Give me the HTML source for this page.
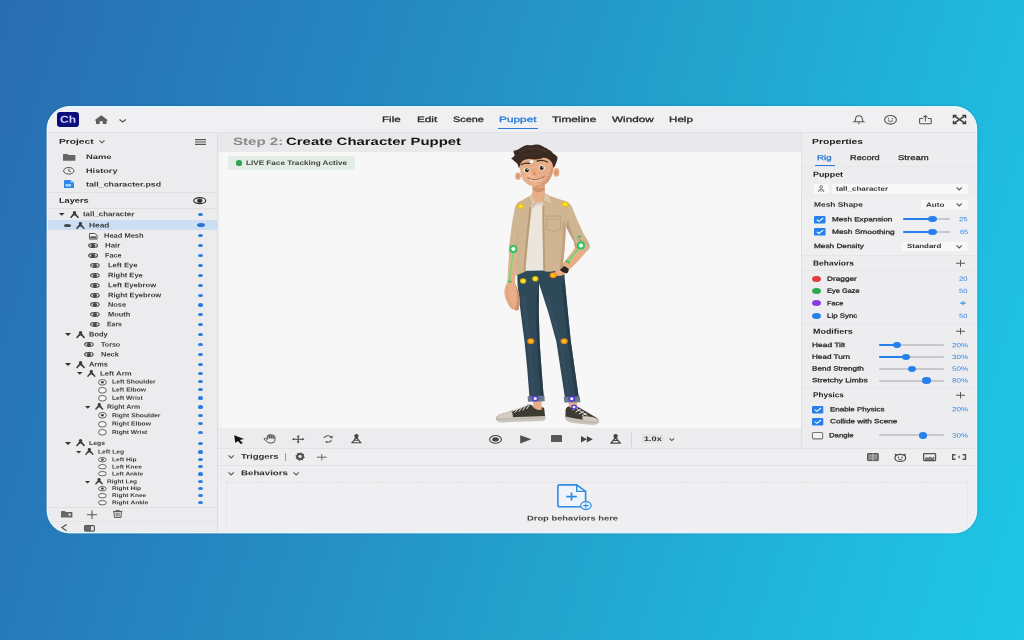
<!DOCTYPE html><html><head><meta charset="utf-8"><title>Character Animator</title><style>
html,body{margin:0;padding:0;width:1024px;height:640px;overflow:hidden}
body{background:linear-gradient(107deg,#2a6cb3 0%,#267ab9 16%,#2591c5 42%,#22a2cc 58%,#20bade 84%,#1ec7e4 100%);font-family:"Liberation Sans",sans-serif;position:relative}
#win{position:absolute;left:0;top:0;width:1024px;height:640px;clip-path:inset(106.4px 46.7px 106.5px 46.5px round 23px);filter:blur(0.4px)}
#edge{position:absolute;left:46.5px;top:106.4px;width:930.8px;height:427.1px;border-radius:23px;box-shadow:inset 0 0 0 1.1px rgba(222,250,255,.95),inset 0 0 1.6px 1px rgba(222,250,255,.6),0 0 2.5px rgba(10,70,120,.4);pointer-events:none}
.t{position:absolute;white-space:nowrap;line-height:1;transform-origin:0 50%}
svg{overflow:visible}
</style></head><body>
<div id="win">
<div style="position:absolute;left:46px;top:106px;width:932px;height:26px;background:#f0f0f2;"></div>
<div style="position:absolute;left:46px;top:132px;width:932px;height:1px;background:#e3e3e6;"></div>
<div style="position:absolute;left:46px;top:133px;width:171px;height:401px;background:#ececee;"></div>
<div style="position:absolute;left:217px;top:133px;width:1px;height:401px;background:#dddde0;"></div>
<div style="position:absolute;left:218px;top:133px;width:584px;height:19px;background:#e9e9eb;"></div>
<div style="position:absolute;left:218px;top:152px;width:2px;height:382px;background:#f1f1f3;"></div>
<div style="position:absolute;left:220px;top:152px;width:582px;height:276px;background:#f7f7f8;"></div>
<div style="position:absolute;left:218px;top:428px;width:584px;height:20px;background:#ececee;"></div>
<div style="position:absolute;left:802px;top:133px;width:176px;height:315px;background:#ededef;"></div>
<div style="position:absolute;left:801px;top:133px;width:1px;height:315px;background:#dfdfe2;"></div>
<div style="position:absolute;left:218px;top:448px;width:760px;height:1px;background:#e2e2e5;"></div>
<div style="position:absolute;left:218px;top:449px;width:760px;height:16px;background:#eeeef0;"></div>
<div style="position:absolute;left:218px;top:465px;width:760px;height:1px;background:#e2e2e5;"></div>
<div style="position:absolute;left:218px;top:466px;width:760px;height:16px;background:#eeeef0;"></div>
<div style="position:absolute;left:218px;top:482px;width:760px;height:52px;background:#efeff1;"></div>
<div style="position:absolute;left:56.7px;top:112.4px;width:22.4px;height:14.4px;border-radius:3.2px;background:#0c0c7a"></div>
<svg style="position:absolute;left:94.1px;top:114.8px;" width="14.6" height="9.3" viewBox="0 0 16 10.6" preserveAspectRatio="none"><path d="M8 0.3 L0.3 6.2 L2.2 6.2 L2.2 10.3 L6.3 10.3 L6.3 7 L9.7 7 L9.7 10.3 L13.8 10.3 L13.8 6.2 L15.7 6.2 Z" fill="#5e5e5e"/></svg>
<svg style="position:absolute;left:118.6px;top:118.7px;" width="7.4" height="3.6" viewBox="0 0 7.4 3.6"><path d="M0.5 0.5 L3.7 3 L6.9 0.5" fill="none" stroke="#555" stroke-width="1.1"/></svg>
<div style="position:absolute;left:498px;top:127.7px;width:39.5px;height:1.5px;background:#2a7bd6;"></div>
<svg style="position:absolute;left:853.2px;top:115px;" width="11.8" height="9" viewBox="0 0 12 10" preserveAspectRatio="none"><path d="M6 0.8 C3.4 0.8 2.6 2.8 2.6 4.6 C2.6 6.4 1.6 7 0.9 7.6 L11.1 7.6 C10.4 7 9.4 6.4 9.4 4.6 C9.4 2.8 8.6 0.8 6 0.8 Z" fill="none" stroke="#555" stroke-width="1.1"/><path d="M4.8 8.6 Q6 9.9 7.2 8.6" fill="none" stroke="#555" stroke-width="1.1"/></svg>
<svg style="position:absolute;left:884px;top:115px;" width="13" height="10" viewBox="0 0 13 10"><ellipse cx="6.5" cy="4.8" rx="5.9" ry="4.3" fill="none" stroke="#555" stroke-width="1.1"/><circle cx="4.6" cy="3.7" r="0.7" fill="#555"/><circle cx="8.4" cy="3.7" r="0.7" fill="#555"/><path d="M4 5.6 Q6.5 7.8 9 5.6" fill="none" stroke="#555" stroke-width="1"/></svg>
<svg style="position:absolute;left:918.6px;top:114.9px;" width="12.8" height="9.4" viewBox="0 0 13 11" preserveAspectRatio="none"><path d="M4 4 L1.2 4 Q0.6 4 0.6 4.8 L0.6 9.4 Q0.6 10.2 1.4 10.2 L11.6 10.2 Q12.4 10.2 12.4 9.4 L12.4 4.8 Q12.4 4 11.8 4 L9 4" fill="none" stroke="#555" stroke-width="1.1"/><path d="M6.5 7.2 L6.5 1 M4.4 2.8 L6.5 0.8 L8.6 2.8" fill="none" stroke="#555" stroke-width="1.1"/></svg>
<svg style="position:absolute;left:953px;top:115px;" width="13" height="9" viewBox="0 0 13 9"><path d="M1.5 1.2 L11.5 7.8 M11.5 1.2 L1.5 7.8" stroke="#3c3c3c" stroke-width="1.5" fill="none"/><path d="M0.5 3.2 L0.5 0.5 L3.6 0.5 M9.4 0.5 L12.5 0.5 L12.5 3.2 M12.5 5.8 L12.5 8.5 L9.4 8.5 M3.6 8.5 L0.5 8.5 L0.5 5.8" stroke="#3c3c3c" stroke-width="1.5" fill="none"/></svg>
<svg style="position:absolute;left:98.6px;top:139.9px;" width="6" height="3.2" viewBox="0 0 6 3.2"><path d="M0.5 0.4 L3.0 2.8000000000000003 L5.5 0.4" fill="none" stroke="#555" stroke-width="1.1"/></svg>
<svg style="position:absolute;left:195px;top:138.6px;" width="11" height="6" viewBox="0 0 11 6"><path d="M0 0.6 H11 M0 3 H11 M0 5.4 H11" stroke="#555" stroke-width="1.1"/></svg>
<svg style="position:absolute;left:63px;top:153.6px;" width="12.5" height="6.8" viewBox="0 0 12.5 6.8"><path d="M0 0.6 Q0 0 0.6 0 L4.4 0 L5.6 1.1 L11.8 1.1 Q12.4 1.1 12.4 1.7 L12.4 6.2 Q12.4 6.8 11.8 6.8 L0.6 6.8 Q0 6.8 0 6.2 Z" fill="#666"/></svg>
<svg style="position:absolute;left:63.3px;top:167px;" width="11.6" height="7.6" viewBox="0 0 11.6 7.6"><ellipse cx="5.8" cy="3.8" rx="5.2" ry="3.3" fill="none" stroke="#444" stroke-width="0.9"/><path d="M5.8 1.8 L5.8 4 L7.8 4.6" fill="none" stroke="#444" stroke-width="0.9"/></svg>
<svg style="position:absolute;left:64px;top:180px;" width="10" height="8" viewBox="0 0 10 8"><path d="M0.6 0 L6.6 0 L10 2.6 L10 7.4 Q10 8 9.4 8 L0.6 8 Q0 8 0 7.4 L0 0.6 Q0 0 0.6 0 Z" fill="#2f8af0"/><path d="M6.6 0 L6.6 2.6 L10 2.6 Z" fill="#9ccbfb"/><rect x="1.6" y="4.2" width="5.4" height="2.2" fill="#d6e9fd" opacity="0.85"/></svg>
<div style="position:absolute;left:46px;top:192px;width:171px;height:1px;background:#e0e0e3;"></div>
<svg style="position:absolute;left:192.5px;top:196.6px;" width="13.5" height="7.4" viewBox="0 0 13.5 7.4"><ellipse cx="6.75" cy="3.7" rx="6" ry="3" fill="none" stroke="#333" stroke-width="1.2"/><ellipse cx="6.75" cy="3.7" rx="2.7" ry="2.2" fill="#444"/><ellipse cx="6.75" cy="3.7" rx="1.2" ry="0.9" fill="#222"/></svg>
<div style="position:absolute;left:46px;top:208px;width:171px;height:1px;background:#e0e0e3;"></div>
<div style="position:absolute;left:46px;top:219.9px;width:170.6px;height:10.5px;background:#cbdef3;"></div>
<svg style="position:absolute;left:59.2px;top:213.18px;" width="5.500000000000005" height="2.6400000000000023" viewBox="0 0 5.500000000000005 2.6400000000000023"><path d="M0 0 L5.500000000000005 0 L2.7500000000000027 2.6400000000000023 Z" fill="#333"/></svg>
<svg style="position:absolute;left:70.3px;top:210.55px;" width="9.000000000000004" height="6.900000000000003" viewBox="0 0 9.000000000000004 6.900000000000003"><g transform="scale(1.0000000000000004,0.9200000000000005)"><circle cx="4.5" cy="1.6" r="1.65" fill="#3c3c3c"/><path d="M4.5 2.8 L1 6.9 M4.5 2.8 L8 6.9" fill="none" stroke="#3c3c3c" stroke-width="1.6" stroke-linecap="round"/><path d="M3.1 2.7 L5.9 2.7 L7 5.3 L2 5.3 Z" fill="#3c3c3c"/><path d="M3.6 5.4 L4.5 4.4 L5.4 5.4 Z" fill="#ececee" opacity="0.7"/></g></svg>
<div style="position:absolute;left:197.8px;top:212.65px;width:5.2px;height:3.3px;border-radius:50%;background:#2b7cdc"></div>
<svg style="position:absolute;left:76px;top:221.72666666666666px;" width="8.8" height="6.746666666666668" viewBox="0 0 8.8 6.746666666666668"><g transform="scale(0.9777777777777779,0.8995555555555557)"><circle cx="4.5" cy="1.6" r="1.65" fill="#3c3c3c"/><path d="M4.5 2.8 L1 6.9 M4.5 2.8 L8 6.9" fill="none" stroke="#3c3c3c" stroke-width="1.6" stroke-linecap="round"/><path d="M3.1 2.7 L5.9 2.7 L7 5.3 L2 5.3 Z" fill="#3c3c3c"/><path d="M3.6 5.4 L4.5 4.4 L5.4 5.4 Z" fill="#ececee" opacity="0.7"/></g></svg>
<div style="position:absolute;left:64.4px;top:223.9px;width:6.8999999999999915px;height:3px;border-radius:50%;background:#444"></div>
<div style="position:absolute;left:196.6px;top:223.3px;width:8.2px;height:4.1px;border-radius:50%;background:#2c74d2"></div>
<svg style="position:absolute;left:88.80000000000001px;top:232.6px;" width="8.3" height="6.2" viewBox="0 0 8.3 6.2"><path d="M0.5 0.5 L5.8 0.5 L8.1 2.4 L8.1 6.1 L0.5 6.1 Z" fill="#f4f4f6" stroke="#444" stroke-width="0.9"/><path d="M1.4 3.3 H7.2 V5.4 H1.4 Z" fill="#555"/></svg>
<div style="position:absolute;left:197.8px;top:234.04999999999998px;width:5.2px;height:3.3px;border-radius:50%;background:#2b7cdc"></div>
<svg style="position:absolute;left:87.5px;top:242.975px;" width="10.099999999999994" height="5.049999999999997" viewBox="0 0 10.099999999999994 5.049999999999997"><g transform="scale(1.0099999999999993)"><ellipse cx="5" cy="2.5" rx="4.4" ry="1.95" fill="none" stroke="#444" stroke-width="1.1"/><ellipse cx="5" cy="2.5" rx="2.3" ry="1.6" fill="#444"/></g></svg>
<div style="position:absolute;left:197.8px;top:243.85px;width:5.2px;height:3.3px;border-radius:50%;background:#2b7cdc"></div>
<svg style="position:absolute;left:87.5px;top:252.975px;" width="10.099999999999994" height="5.049999999999997" viewBox="0 0 10.099999999999994 5.049999999999997"><g transform="scale(1.0099999999999993)"><ellipse cx="5" cy="2.5" rx="4.4" ry="1.95" fill="none" stroke="#444" stroke-width="1.1"/><ellipse cx="5" cy="2.5" rx="2.3" ry="1.6" fill="#444"/></g></svg>
<div style="position:absolute;left:197.8px;top:253.85px;width:5.2px;height:3.3px;border-radius:50%;background:#2b7cdc"></div>
<svg style="position:absolute;left:90.4px;top:262.95px;" width="9.799999999999997" height="4.899999999999999" viewBox="0 0 9.799999999999997 4.899999999999999"><g transform="scale(0.9799999999999998)"><ellipse cx="5" cy="2.5" rx="4.4" ry="1.95" fill="none" stroke="#444" stroke-width="1.1"/><ellipse cx="5" cy="2.5" rx="2.3" ry="1.6" fill="#444"/></g></svg>
<div style="position:absolute;left:197.8px;top:263.75px;width:5.2px;height:3.3px;border-radius:50%;background:#2b7cdc"></div>
<svg style="position:absolute;left:90.4px;top:272.95px;" width="9.799999999999997" height="4.899999999999999" viewBox="0 0 9.799999999999997 4.899999999999999"><g transform="scale(0.9799999999999998)"><ellipse cx="5" cy="2.5" rx="4.4" ry="1.95" fill="none" stroke="#444" stroke-width="1.1"/><ellipse cx="5" cy="2.5" rx="2.3" ry="1.6" fill="#444"/></g></svg>
<div style="position:absolute;left:197.8px;top:273.75px;width:5.2px;height:3.3px;border-radius:50%;background:#2b7cdc"></div>
<svg style="position:absolute;left:90.4px;top:282.95px;" width="9.799999999999997" height="4.899999999999999" viewBox="0 0 9.799999999999997 4.899999999999999"><g transform="scale(0.9799999999999998)"><ellipse cx="5" cy="2.5" rx="4.4" ry="1.95" fill="none" stroke="#444" stroke-width="1.1"/><ellipse cx="5" cy="2.5" rx="2.3" ry="1.6" fill="#444"/></g></svg>
<div style="position:absolute;left:197.8px;top:283.75px;width:5.2px;height:3.3px;border-radius:50%;background:#2b7cdc"></div>
<svg style="position:absolute;left:90.4px;top:292.85px;" width="9.799999999999997" height="4.899999999999999" viewBox="0 0 9.799999999999997 4.899999999999999"><g transform="scale(0.9799999999999998)"><ellipse cx="5" cy="2.5" rx="4.4" ry="1.95" fill="none" stroke="#444" stroke-width="1.1"/><ellipse cx="5" cy="2.5" rx="2.3" ry="1.6" fill="#444"/></g></svg>
<div style="position:absolute;left:197.8px;top:293.65000000000003px;width:5.2px;height:3.3px;border-radius:50%;background:#2b7cdc"></div>
<svg style="position:absolute;left:90.4px;top:302.45px;" width="9.799999999999997" height="4.899999999999999" viewBox="0 0 9.799999999999997 4.899999999999999"><g transform="scale(0.9799999999999998)"><ellipse cx="5" cy="2.5" rx="4.4" ry="1.95" fill="none" stroke="#444" stroke-width="1.1"/><ellipse cx="5" cy="2.5" rx="2.3" ry="1.6" fill="#444"/></g></svg>
<div style="position:absolute;left:197.8px;top:303.25px;width:5.2px;height:3.3px;border-radius:50%;background:#2b7cdc"></div>
<svg style="position:absolute;left:90.4px;top:312.05px;" width="9.799999999999997" height="4.899999999999999" viewBox="0 0 9.799999999999997 4.899999999999999"><g transform="scale(0.9799999999999998)"><ellipse cx="5" cy="2.5" rx="4.4" ry="1.95" fill="none" stroke="#444" stroke-width="1.1"/><ellipse cx="5" cy="2.5" rx="2.3" ry="1.6" fill="#444"/></g></svg>
<div style="position:absolute;left:197.8px;top:312.85px;width:5.2px;height:3.3px;border-radius:50%;background:#2b7cdc"></div>
<svg style="position:absolute;left:90.4px;top:321.75px;" width="9.799999999999997" height="4.899999999999999" viewBox="0 0 9.799999999999997 4.899999999999999"><g transform="scale(0.9799999999999998)"><ellipse cx="5" cy="2.5" rx="4.4" ry="1.95" fill="none" stroke="#444" stroke-width="1.1"/><ellipse cx="5" cy="2.5" rx="2.3" ry="1.6" fill="#444"/></g></svg>
<div style="position:absolute;left:197.8px;top:322.55px;width:5.2px;height:3.3px;border-radius:50%;background:#2b7cdc"></div>
<svg style="position:absolute;left:65.10000000000001px;top:333.236px;" width="6.1" height="2.928" viewBox="0 0 6.1 2.928"><path d="M0 0 L6.1 0 L3.05 2.928 Z" fill="#333"/></svg>
<svg style="position:absolute;left:75.7px;top:330.71166666666664px;" width="9.099999999999998" height="6.976666666666665" viewBox="0 0 9.099999999999998 6.976666666666665"><g transform="scale(1.0111111111111108,0.9302222222222221)"><circle cx="4.5" cy="1.6" r="1.65" fill="#3c3c3c"/><path d="M4.5 2.8 L1 6.9 M4.5 2.8 L8 6.9" fill="none" stroke="#3c3c3c" stroke-width="1.6" stroke-linecap="round"/><path d="M3.1 2.7 L5.9 2.7 L7 5.3 L2 5.3 Z" fill="#3c3c3c"/><path d="M3.6 5.4 L4.5 4.4 L5.4 5.4 Z" fill="#ececee" opacity="0.7"/></g></svg>
<div style="position:absolute;left:197.8px;top:332.85px;width:5.2px;height:3.3px;border-radius:50%;background:#2b7cdc"></div>
<svg style="position:absolute;left:84.3px;top:342.25px;" width="9.799999999999997" height="4.899999999999999" viewBox="0 0 9.799999999999997 4.899999999999999"><g transform="scale(0.9799999999999998)"><ellipse cx="5" cy="2.5" rx="4.4" ry="1.95" fill="none" stroke="#444" stroke-width="1.1"/><ellipse cx="5" cy="2.5" rx="2.3" ry="1.6" fill="#444"/></g></svg>
<div style="position:absolute;left:197.8px;top:343.05px;width:5.2px;height:3.3px;border-radius:50%;background:#2b7cdc"></div>
<svg style="position:absolute;left:84.3px;top:352.05px;" width="9.799999999999997" height="4.899999999999999" viewBox="0 0 9.799999999999997 4.899999999999999"><g transform="scale(0.9799999999999998)"><ellipse cx="5" cy="2.5" rx="4.4" ry="1.95" fill="none" stroke="#444" stroke-width="1.1"/><ellipse cx="5" cy="2.5" rx="2.3" ry="1.6" fill="#444"/></g></svg>
<div style="position:absolute;left:197.8px;top:352.85px;width:5.2px;height:3.3px;border-radius:50%;background:#2b7cdc"></div>
<svg style="position:absolute;left:65.10000000000001px;top:363.13599999999997px;" width="6.1" height="2.928" viewBox="0 0 6.1 2.928"><path d="M0 0 L6.1 0 L3.05 2.928 Z" fill="#333"/></svg>
<svg style="position:absolute;left:75.7px;top:360.6116666666666px;" width="9.099999999999998" height="6.976666666666665" viewBox="0 0 9.099999999999998 6.976666666666665"><g transform="scale(1.0111111111111108,0.9302222222222221)"><circle cx="4.5" cy="1.6" r="1.65" fill="#3c3c3c"/><path d="M4.5 2.8 L1 6.9 M4.5 2.8 L8 6.9" fill="none" stroke="#3c3c3c" stroke-width="1.6" stroke-linecap="round"/><path d="M3.1 2.7 L5.9 2.7 L7 5.3 L2 5.3 Z" fill="#3c3c3c"/><path d="M3.6 5.4 L4.5 4.4 L5.4 5.4 Z" fill="#ececee" opacity="0.7"/></g></svg>
<div style="position:absolute;left:197.8px;top:362.75px;width:5.2px;height:3.3px;border-radius:50%;background:#2b7cdc"></div>
<svg style="position:absolute;left:76.8px;top:372.48px;" width="5.500000000000005" height="2.6400000000000023" viewBox="0 0 5.500000000000005 2.6400000000000023"><path d="M0 0 L5.500000000000005 0 L2.7500000000000027 2.6400000000000023 Z" fill="#333"/></svg>
<svg style="position:absolute;left:86.9px;top:369.96500000000003px;" width="8.699999999999992" height="6.669999999999995" viewBox="0 0 8.699999999999992 6.669999999999995"><g transform="scale(0.9666666666666658,0.8893333333333325)"><circle cx="4.5" cy="1.6" r="1.65" fill="#3c3c3c"/><path d="M4.5 2.8 L1 6.9 M4.5 2.8 L8 6.9" fill="none" stroke="#3c3c3c" stroke-width="1.6" stroke-linecap="round"/><path d="M3.1 2.7 L5.9 2.7 L7 5.3 L2 5.3 Z" fill="#3c3c3c"/><path d="M3.6 5.4 L4.5 4.4 L5.4 5.4 Z" fill="#ececee" opacity="0.7"/></g></svg>
<div style="position:absolute;left:197.8px;top:371.95000000000005px;width:5.2px;height:3.3px;border-radius:50%;background:#2b7cdc"></div>
<svg style="position:absolute;left:97.6px;top:378.5px;" width="8.800000000000011" height="6.6" viewBox="0 0 8.800000000000011 6.6"><ellipse cx="4.400000000000006" cy="3.3" rx="3.9000000000000057" ry="2.8" fill="#f4f4f6" stroke="#4a4a4a" stroke-width="0.85"/><ellipse cx="4.400000000000006" cy="3.3" rx="1.5" ry="1.3" fill="#444"/></svg>
<div style="position:absolute;left:197.8px;top:380.15000000000003px;width:5.2px;height:3.3px;border-radius:50%;background:#2b7cdc"></div>
<svg style="position:absolute;left:97.6px;top:386.5px;" width="8.800000000000011" height="6.6" viewBox="0 0 8.800000000000011 6.6"><ellipse cx="4.400000000000006" cy="3.3" rx="3.9000000000000057" ry="2.8" fill="#f4f4f6" stroke="#4a4a4a" stroke-width="0.85"/></svg>
<div style="position:absolute;left:197.8px;top:388.15000000000003px;width:5.2px;height:3.3px;border-radius:50%;background:#2b7cdc"></div>
<svg style="position:absolute;left:97.6px;top:394.7px;" width="8.800000000000011" height="6.6" viewBox="0 0 8.800000000000011 6.6"><ellipse cx="4.400000000000006" cy="3.3" rx="3.9000000000000057" ry="2.8" fill="#f4f4f6" stroke="#4a4a4a" stroke-width="0.85"/></svg>
<div style="position:absolute;left:197.8px;top:396.35px;width:5.2px;height:3.3px;border-radius:50%;background:#2b7cdc"></div>
<svg style="position:absolute;left:84.60000000000001px;top:405.88px;" width="5.499999999999991" height="2.6399999999999957" viewBox="0 0 5.499999999999991 2.6399999999999957"><path d="M0 0 L5.499999999999991 0 L2.7499999999999956 2.6399999999999957 Z" fill="#333"/></svg>
<svg style="position:absolute;left:94.7px;top:403.44166666666666px;" width="8.500000000000004" height="6.51666666666667" viewBox="0 0 8.500000000000004 6.51666666666667"><g transform="scale(0.9444444444444449,0.8688888888888893)"><circle cx="4.5" cy="1.6" r="1.65" fill="#3c3c3c"/><path d="M4.5 2.8 L1 6.9 M4.5 2.8 L8 6.9" fill="none" stroke="#3c3c3c" stroke-width="1.6" stroke-linecap="round"/><path d="M3.1 2.7 L5.9 2.7 L7 5.3 L2 5.3 Z" fill="#3c3c3c"/><path d="M3.6 5.4 L4.5 4.4 L5.4 5.4 Z" fill="#ececee" opacity="0.7"/></g></svg>
<div style="position:absolute;left:197.8px;top:405.35px;width:5.2px;height:3.3px;border-radius:50%;background:#2b7cdc"></div>
<svg style="position:absolute;left:97.6px;top:412.3px;" width="8.800000000000011" height="6.6" viewBox="0 0 8.800000000000011 6.6"><ellipse cx="4.400000000000006" cy="3.3" rx="3.9000000000000057" ry="2.8" fill="#f4f4f6" stroke="#4a4a4a" stroke-width="0.85"/><ellipse cx="4.400000000000006" cy="3.3" rx="1.5" ry="1.3" fill="#444"/></svg>
<div style="position:absolute;left:197.8px;top:413.95000000000005px;width:5.2px;height:3.3px;border-radius:50%;background:#2b7cdc"></div>
<svg style="position:absolute;left:97.6px;top:420.5px;" width="8.800000000000011" height="6.6" viewBox="0 0 8.800000000000011 6.6"><ellipse cx="4.400000000000006" cy="3.3" rx="3.9000000000000057" ry="2.8" fill="#f4f4f6" stroke="#4a4a4a" stroke-width="0.85"/></svg>
<div style="position:absolute;left:197.8px;top:422.15000000000003px;width:5.2px;height:3.3px;border-radius:50%;background:#2b7cdc"></div>
<svg style="position:absolute;left:97.6px;top:428.9px;" width="8.800000000000011" height="6.6" viewBox="0 0 8.800000000000011 6.6"><ellipse cx="4.400000000000006" cy="3.3" rx="3.9000000000000057" ry="2.8" fill="#f4f4f6" stroke="#4a4a4a" stroke-width="0.85"/></svg>
<div style="position:absolute;left:197.8px;top:430.55px;width:5.2px;height:3.3px;border-radius:50%;background:#2b7cdc"></div>
<svg style="position:absolute;left:65.10000000000001px;top:441.936px;" width="6.1" height="2.928" viewBox="0 0 6.1 2.928"><path d="M0 0 L6.1 0 L3.05 2.928 Z" fill="#333"/></svg>
<svg style="position:absolute;left:75.7px;top:439.41166666666663px;" width="9.099999999999998" height="6.976666666666665" viewBox="0 0 9.099999999999998 6.976666666666665"><g transform="scale(1.0111111111111108,0.9302222222222221)"><circle cx="4.5" cy="1.6" r="1.65" fill="#3c3c3c"/><path d="M4.5 2.8 L1 6.9 M4.5 2.8 L8 6.9" fill="none" stroke="#3c3c3c" stroke-width="1.6" stroke-linecap="round"/><path d="M3.1 2.7 L5.9 2.7 L7 5.3 L2 5.3 Z" fill="#3c3c3c"/><path d="M3.6 5.4 L4.5 4.4 L5.4 5.4 Z" fill="#ececee" opacity="0.7"/></g></svg>
<div style="position:absolute;left:197.8px;top:441.55px;width:5.2px;height:3.3px;border-radius:50%;background:#2b7cdc"></div>
<svg style="position:absolute;left:76.4px;top:450.928px;" width="5.3000000000000025" height="2.544000000000001" viewBox="0 0 5.3000000000000025 2.544000000000001"><path d="M0 0 L5.3000000000000025 0 L2.6500000000000012 2.544000000000001 Z" fill="#333"/></svg>
<svg style="position:absolute;left:85.3px;top:448.365px;" width="8.700000000000006" height="6.670000000000005" viewBox="0 0 8.700000000000006 6.670000000000005"><g transform="scale(0.9666666666666673,0.889333333333334)"><circle cx="4.5" cy="1.6" r="1.65" fill="#3c3c3c"/><path d="M4.5 2.8 L1 6.9 M4.5 2.8 L8 6.9" fill="none" stroke="#3c3c3c" stroke-width="1.6" stroke-linecap="round"/><path d="M3.1 2.7 L5.9 2.7 L7 5.3 L2 5.3 Z" fill="#3c3c3c"/><path d="M3.6 5.4 L4.5 4.4 L5.4 5.4 Z" fill="#ececee" opacity="0.7"/></g></svg>
<div style="position:absolute;left:197.8px;top:450.35px;width:5.2px;height:3.3px;border-radius:50%;background:#2b7cdc"></div>
<svg style="position:absolute;left:97.6px;top:456.90000000000003px;" width="8.800000000000011" height="5.4" viewBox="0 0 8.800000000000011 5.4"><ellipse cx="4.400000000000006" cy="2.7" rx="3.9000000000000057" ry="2.2" fill="#f4f4f6" stroke="#4a4a4a" stroke-width="0.85"/><ellipse cx="4.400000000000006" cy="2.7" rx="1.5" ry="1.1" fill="#444"/></svg>
<div style="position:absolute;left:197.8px;top:457.95000000000005px;width:5.2px;height:3.3px;border-radius:50%;background:#2b7cdc"></div>
<svg style="position:absolute;left:97.6px;top:464.1px;" width="8.800000000000011" height="5.4" viewBox="0 0 8.800000000000011 5.4"><ellipse cx="4.400000000000006" cy="2.7" rx="3.9000000000000057" ry="2.2" fill="#f4f4f6" stroke="#4a4a4a" stroke-width="0.85"/></svg>
<div style="position:absolute;left:197.8px;top:465.15000000000003px;width:5.2px;height:3.3px;border-radius:50%;background:#2b7cdc"></div>
<svg style="position:absolute;left:97.6px;top:471.3px;" width="8.800000000000011" height="5.4" viewBox="0 0 8.800000000000011 5.4"><ellipse cx="4.400000000000006" cy="2.7" rx="3.9000000000000057" ry="2.2" fill="#f4f4f6" stroke="#4a4a4a" stroke-width="0.85"/></svg>
<div style="position:absolute;left:197.8px;top:472.35px;width:5.2px;height:3.3px;border-radius:50%;background:#2b7cdc"></div>
<svg style="position:absolute;left:85.0px;top:480.576px;" width="5.1" height="2.448" viewBox="0 0 5.1 2.448"><path d="M0 0 L5.1 0 L2.55 2.448 Z" fill="#333"/></svg>
<svg style="position:absolute;left:94.7px;top:478.195px;" width="8.099999999999998" height="6.209999999999999" viewBox="0 0 8.099999999999998 6.209999999999999"><g transform="scale(0.8999999999999998,0.8279999999999998)"><circle cx="4.5" cy="1.6" r="1.65" fill="#3c3c3c"/><path d="M4.5 2.8 L1 6.9 M4.5 2.8 L8 6.9" fill="none" stroke="#3c3c3c" stroke-width="1.6" stroke-linecap="round"/><path d="M3.1 2.7 L5.9 2.7 L7 5.3 L2 5.3 Z" fill="#3c3c3c"/><path d="M3.6 5.4 L4.5 4.4 L5.4 5.4 Z" fill="#ececee" opacity="0.7"/></g></svg>
<div style="position:absolute;left:197.8px;top:479.95000000000005px;width:5.2px;height:3.3px;border-radius:50%;background:#2b7cdc"></div>
<svg style="position:absolute;left:97.6px;top:485.8px;" width="8.800000000000011" height="5.4" viewBox="0 0 8.800000000000011 5.4"><ellipse cx="4.400000000000006" cy="2.7" rx="3.9000000000000057" ry="2.2" fill="#f4f4f6" stroke="#4a4a4a" stroke-width="0.85"/><ellipse cx="4.400000000000006" cy="2.7" rx="1.5" ry="1.1" fill="#444"/></svg>
<div style="position:absolute;left:197.8px;top:486.85px;width:5.2px;height:3.3px;border-radius:50%;background:#2b7cdc"></div>
<svg style="position:absolute;left:97.6px;top:492.6px;" width="8.800000000000011" height="5.4" viewBox="0 0 8.800000000000011 5.4"><ellipse cx="4.400000000000006" cy="2.7" rx="3.9000000000000057" ry="2.2" fill="#f4f4f6" stroke="#4a4a4a" stroke-width="0.85"/></svg>
<div style="position:absolute;left:197.8px;top:493.65000000000003px;width:5.2px;height:3.3px;border-radius:50%;background:#2b7cdc"></div>
<svg style="position:absolute;left:97.6px;top:500.0px;" width="8.800000000000011" height="5.4" viewBox="0 0 8.800000000000011 5.4"><ellipse cx="4.400000000000006" cy="2.7" rx="3.9000000000000057" ry="2.2" fill="#f4f4f6" stroke="#4a4a4a" stroke-width="0.85"/></svg>
<div style="position:absolute;left:197.8px;top:501.05px;width:5.2px;height:3.3px;border-radius:50%;background:#2b7cdc"></div>
<div style="position:absolute;left:46px;top:507px;width:171px;height:1px;background:#e0e0e3;"></div>
<svg style="position:absolute;left:60.8px;top:510.8px;" width="11.6" height="6.4" viewBox="0 0 11.6 6.4"><path d="M0 0.5 Q0 0 0.5 0 L3.8 0 L4.8 1 L10.8 1 Q11.4 1 11.4 1.6 L11.4 5.9 Q11.4 6.4 10.8 6.4 L0.5 6.4 Q0 6.4 0 5.9 Z" fill="#666"/><path d="M7.2 3.6 H10 M8.6 2.3 V4.9" stroke="#ebebed" stroke-width="0.9"/></svg>
<svg style="position:absolute;left:87.3px;top:509.6px;" width="10" height="9.4" viewBox="0 0 10 9.4"><path d="M0 4.7 H10 M5 0.4 V9" stroke="#555" stroke-width="1.1"/></svg>
<svg style="position:absolute;left:113px;top:510.2px;" width="9.4" height="7.8" viewBox="0 0 9.4 7.8"><path d="M0 1.4 H9.4 M3.2 1.4 V0.3 H6.2 V1.4" stroke="#555" stroke-width="0.9" fill="none"/><path d="M1 1.6 L1.4 7.4 H8 L8.4 1.6 Z" fill="none" stroke="#555" stroke-width="1"/><path d="M3.3 2.8 V6.4 M4.7 2.8 V6.4 M6.1 2.8 V6.4" stroke="#555" stroke-width="0.8"/></svg>
<div style="position:absolute;left:46px;top:520.6px;width:171px;height:0.8px;background:#e4e4e7;"></div>
<svg style="position:absolute;left:60.5px;top:524.4px;" width="6.2" height="7.2" viewBox="0 0 6.2 7.2"><path d="M5.6 0.5 L0.9 3.6 L5.6 6.7" fill="none" stroke="#444" stroke-width="1.1"/></svg>
<svg style="position:absolute;left:84px;top:524.6px;" width="11" height="6.8" viewBox="0 0 11 6.8"><rect x="0.5" y="0.5" width="10" height="5.8" rx="0.8" fill="#666" stroke="#555" stroke-width="1"/><rect x="7" y="1.3" width="2.8" height="4.2" fill="#e8e8ea"/></svg>
<div style="position:absolute;left:228.2px;top:155.7px;width:126.8px;height:14.6px;background:#e4ece6;border-radius:1.5px;"></div>
<div style="position:absolute;left:235.6px;top:160.4px;width:6.9px;height:5.3px;border-radius:50%;background:#2ea44f"></div>
<svg style="position:absolute;left:233.8px;top:434.5px;" width="10.4" height="9.2" viewBox="0 0 10.4 9.2"><path d="M0.2 0.2 L10.1 4 L5.7 4.9 L8.9 8.1 L6.8 8.9 L3.9 5.9 L1.3 7.9 Z" fill="#111"/></svg>
<svg style="position:absolute;left:262.6px;top:434.4px;" width="12.6" height="9.6" viewBox="0.4 0 11 12.2" preserveAspectRatio="none"><path d="M4.2 7 L4.2 2.4 Q4.2 1.5 5 1.5 Q5.8 1.5 5.8 2.4 L5.8 5.6 L5.8 1.5 Q5.8 0.6 6.7 0.6 Q7.5 0.6 7.5 1.5 L7.5 5.6 L7.5 1.9 Q7.5 1 8.4 1 Q9.2 1 9.2 1.9 L9.2 5.8 L9.2 3 Q9.2 2.2 10 2.2 Q10.8 2.2 10.8 3 L10.8 8 Q10.8 11.6 7.4 11.6 Q5 11.6 3.6 9.6 L1.4 6.6 Q1 5.8 1.8 5.5 Q2.5 5.3 3 5.9 Z" fill="none" stroke="#444" stroke-width="0.95" stroke-linejoin="round" vector-effect="non-scaling-stroke"/></svg>
<svg style="position:absolute;left:292.4px;top:435px;" width="12.4" height="8.4" viewBox="0 0 12.4 8.4"><path d="M6.2 1 V7.4 M1.2 4.2 H11.2" stroke="#444" stroke-width="1.1"/><path d="M6.2 0 L7.7 1.8 H4.7 Z M6.2 8.4 L7.7 6.6 H4.7 Z M0 4.2 L2 2.8 V5.6 Z M12.4 4.2 L10.4 2.8 V5.6 Z" fill="#444"/></svg>
<svg style="position:absolute;left:323px;top:434.8px;" width="9.8" height="8" viewBox="0 0 9.8 8"><path d="M0.8 2.8 Q2.4 0.8 5 0.8 Q7.2 0.8 8.4 2.4" fill="none" stroke="#555" stroke-width="1.05"/><path d="M9.6 0.4 L9.4 3.4 L6.5 2.7 Z" fill="#555"/><path d="M8.6 5.4 Q7.2 7.2 4.8 7.2 Q3.6 7.2 2.8 6.8" fill="none" stroke="#555" stroke-width="1.05"/><path d="M4.6 6 L2.2 6.8 L4.2 8 Z" fill="#555"/></svg>
<svg style="position:absolute;left:351.2px;top:434.356px;" width="10.800000000000011" height="9.28800000000001" viewBox="0 0 10.800000000000011 9.28800000000001"><g transform="scale(1.0800000000000012)"><ellipse cx="5" cy="1.8" rx="2" ry="1.8" fill="#444"/><path d="M5 3 L1.1 8 M5 3 L8.9 8 M0.6 8.1 H9.4 M3 5.8 H7" fill="none" stroke="#444" stroke-width="1.05" stroke-linecap="round"/><path d="M3.8 3.2 H6.2 L6.8 4.6 H3.2 Z" fill="#444"/></g></svg>
<svg style="position:absolute;left:488.6px;top:434.6px;" width="13" height="8.8" viewBox="0 0 13 8.8"><ellipse cx="6.5" cy="4.4" rx="5.9" ry="3.85" fill="none" stroke="#444" stroke-width="1.1"/><ellipse cx="6.5" cy="4.4" rx="3.3" ry="2.1" fill="#444"/></svg>
<svg style="position:absolute;left:520.2px;top:434.6px;" width="11.6" height="8.6" viewBox="0 0 11.6 8.6"><path d="M0.2 0.2 L11.4 4.3 L0.2 8.4 Z" fill="#505050"/></svg>
<div style="position:absolute;left:550.8px;top:435.2px;width:10.8px;height:7.3px;background:#585858;border-radius:0.6px;"></div>
<svg style="position:absolute;left:580.5px;top:435.7px;" width="12" height="6.6" viewBox="0 0 12 6.6"><path d="M0 0 L5.8 3.3 L0 6.6 Z M5.8 0 L11.8 3.3 L5.8 6.6 Z" fill="#444"/></svg>
<svg style="position:absolute;left:610.2px;top:434.184px;" width="11.199999999999932" height="9.631999999999941" viewBox="0 0 11.199999999999932 9.631999999999941"><g transform="scale(1.1199999999999932)"><ellipse cx="5" cy="1.8" rx="2" ry="1.8" fill="#444"/><path d="M5 3 L1.1 8 M5 3 L8.9 8 M0.6 8.1 H9.4 M3 5.8 H7" fill="none" stroke="#444" stroke-width="1.05" stroke-linecap="round"/><path d="M3.8 3.2 H6.2 L6.8 4.6 H3.2 Z" fill="#444"/></g></svg>
<div style="position:absolute;left:631.4px;top:431.7px;width:1.0px;height:15.3px;background:#d4d4d7;"></div>
<div style="position:absolute;left:642.3px;top:434.4px;width:21.1px;height:9.0px;background:#e4e4e7;border-radius:1px;"></div>
<svg style="position:absolute;left:669.2px;top:437.6px;" width="5.6" height="3" viewBox="0 0 5.6 3"><path d="M0.5 0.4 L2.8 2.6 L5.1 0.4" fill="none" stroke="#555" stroke-width="1.1"/></svg>
<svg style="position:absolute;left:228px;top:455.2px;" width="6.3" height="3.3" viewBox="0 0 6.3 3.3"><path d="M0.5 0.4 L3.15 2.9 L5.8 0.4" fill="none" stroke="#555" stroke-width="1.1"/></svg>
<div style="position:absolute;left:285.2px;top:452.6px;width:0.8px;height:8.0px;background:#9a9a9d;"></div>
<svg style="position:absolute;left:295px;top:452px;" width="10.2" height="9.2" viewBox="0 0 10.2 9.2"><polygon points="10.00,5.48 8.18,6.45 7.88,8.34 5.82,7.87 4.12,9.01 3.04,7.37 0.94,7.10 1.47,5.25 0.20,3.72 2.02,2.75 2.32,0.86 4.38,1.33 6.08,0.19 7.16,1.83 9.26,2.10 8.73,3.95" fill="#555"/><circle cx="5.1" cy="4.6" r="3.6" fill="#555"/><ellipse cx="5.1" cy="4.6" rx="1.7" ry="1.5" fill="#eeeef0"/></svg>
<svg style="position:absolute;left:317.4px;top:453.6px;" width="9.6" height="6.4" viewBox="0 0 9.6 6.4"><path d="M0 3.2 H9.6 M4.8 0 V6.4" stroke="#666" stroke-width="1"/></svg>
<svg style="position:absolute;left:228px;top:472px;" width="6.3" height="3.3" viewBox="0 0 6.3 3.3"><path d="M0.5 0.4 L3.15 2.9 L5.8 0.4" fill="none" stroke="#555" stroke-width="1.1"/></svg>
<svg style="position:absolute;left:293.3px;top:472px;" width="6.3" height="3.3" viewBox="0 0 6.3 3.3"><path d="M0.5 0.4 L3.15 2.9 L5.8 0.4" fill="none" stroke="#555" stroke-width="1.1"/></svg>
<div style="position:absolute;left:226px;top:482.4px;width:742px;height:60px;border:1px dashed #e3e3e6;box-sizing:border-box"></div>
<svg style="position:absolute;left:557px;top:483.8px;" width="35" height="26.4" viewBox="0 0 35 26.4"><path d="M2.6 0.9 L19.6 0.9 L28.6 7.4 L28.6 20.6 Q28.6 22.8 26.4 22.8 L2.6 22.8 Q0.9 22.8 0.9 21 L0.9 2.6 Q0.9 0.9 2.6 0.9 Z" fill="#f0f5fb" stroke="#2c8be4" stroke-width="1.6"/><path d="M19.6 0.9 L19.8 7.4 L28.6 7.4" fill="none" stroke="#2c8be4" stroke-width="1.4"/><path d="M9.2 12.6 H19.8 M14.5 8.6 V16.6" stroke="#2c8be4" stroke-width="1.7"/><ellipse cx="28.9" cy="21.6" rx="5.2" ry="3.9" fill="#f0f5fb" stroke="#2c8be4" stroke-width="1.3"/><path d="M26.2 21.6 H31.6 M28.9 19.5 V23.7" stroke="#2c8be4" stroke-width="1.1"/></svg>
<svg style="position:absolute;left:867.3px;top:453.3px;" width="11.8" height="8.1" viewBox="0 0 11.8 8.1"><rect x="0.5" y="0.5" width="10.8" height="7.1" rx="0.5" fill="#777" stroke="#565656" stroke-width="1"/><path d="M5.9 0.5 V7.6" stroke="#d8d8db" stroke-width="0.9"/><path d="M1.6 2.4 H4.6 M1.6 4 H4.6 M1.6 5.6 H4.6 M7.2 2.4 H10.2 M7.2 4 H10.2 M7.2 5.6 H10.2" stroke="#bdbdc0" stroke-width="0.6"/></svg>
<svg style="position:absolute;left:894.2px;top:452.9px;" width="12.6" height="8.8" viewBox="0 0 12.6 8.8"><ellipse cx="6.3" cy="4.9" rx="5.4" ry="3.5" fill="none" stroke="#4a4a4a" stroke-width="1.25"/><path d="M0.7 0.5 L3.8 1.7 L1.3 3.5 Z M11.9 0.5 L8.8 1.7 L11.3 3.5 Z" fill="#4a4a4a"/><circle cx="4.5" cy="4.3" r="0.75" fill="#4a4a4a"/><circle cx="8.1" cy="4.3" r="0.75" fill="#4a4a4a"/><path d="M4.2 5.8 Q6.3 7.4 8.4 5.8" fill="none" stroke="#4a4a4a" stroke-width="0.9"/></svg>
<svg style="position:absolute;left:923.2px;top:453px;" width="13.2" height="8.2" viewBox="0 0 13.2 8.2"><rect x="0.65" y="0.65" width="11.9" height="6.9" rx="0.6" fill="none" stroke="#555" stroke-width="1.3"/><path d="M2.2 6 Q3 3.6 4.2 4.8 Q5.2 6 6 4.6 Q7 3.4 8.2 4.8 Q9.2 6 10.8 4 L10.8 6.6 L2.2 6.6 Z" fill="#777" stroke="#555" stroke-width="0.7"/></svg>
<svg style="position:absolute;left:952.1px;top:454.1px;" width="14.2" height="6" viewBox="0 0 14.2 6"><path d="M3.6 0.7 H0.7 V5.3 H3.6 M10.6 0.7 H13.5 V5.3 H10.6" fill="none" stroke="#555" stroke-width="1.4"/><path d="M7.1 1.8 V4.2" stroke="#555" stroke-width="1.3"/></svg>
<div style="position:absolute;left:814.6px;top:164.8px;width:20.2px;height:1.4px;background:#2a7bd6;"></div>
<div style="position:absolute;left:802px;top:166.4px;width:176px;height:1.0px;background:#e6e6e9;"></div>
<div style="position:absolute;left:813.7px;top:184px;width:15.6px;height:10px;background:#f8f8f9;border-radius:1px;"></div>
<div style="position:absolute;left:832.2px;top:184px;width:135.4px;height:10px;background:#f8f8f9;border-radius:1px;"></div>
<svg style="position:absolute;left:818.4px;top:185.4px;" width="6.4" height="7.2" viewBox="0 0 6.4 7.2"><circle cx="3.2" cy="1.9" r="1.4" fill="none" stroke="#555" stroke-width="0.8"/><path d="M0.5 7 Q0.5 4.2 3.2 4.2 Q5.9 4.2 5.9 7" fill="none" stroke="#555" stroke-width="0.8"/><path d="M2 5.2 L3.2 6.6 L4.4 5.2" fill="none" stroke="#555" stroke-width="0.6"/></svg>
<svg style="position:absolute;left:956px;top:187.4px;" width="6.4" height="3.4" viewBox="0 0 6.4 3.4"><path d="M0.5 0.4 L3.2 3.0 L5.9 0.4" fill="none" stroke="#555" stroke-width="1.1"/></svg>
<div style="position:absolute;left:802px;top:196.5px;width:176px;height:58.1px;background:#efeff1;"></div>
<div style="position:absolute;left:921px;top:200px;width:46.6px;height:9.8px;background:#f8f8f9;border-radius:1px;"></div>
<svg style="position:absolute;left:956px;top:203.4px;" width="6.4" height="3.4" viewBox="0 0 6.4 3.4"><path d="M0.5 0.4 L3.2 3.0 L5.9 0.4" fill="none" stroke="#555" stroke-width="1.1"/></svg>
<svg style="position:absolute;left:814.1px;top:215.6px;" width="11.5" height="7.5" viewBox="0 0 11.5 7.5"><rect x="0" y="0" width="11.5" height="7.5" rx="1.2" fill="#2680eb"/><path d="M2.76 3.75 L4.945 5.3999999999999995 L9.200000000000001 2.0250000000000004" fill="none" stroke="#fff" stroke-width="1.05"/></svg>
<div style="position:absolute;left:902.5px;top:218px;width:47.9px;height:2px;background:#c8c8cc;border-radius:1px;"></div>
<div style="position:absolute;left:902.5px;top:217.85px;width:29.9px;height:2.3px;background:#2680eb;border-radius:1px;"></div>
<div style="position:absolute;left:928.1999999999999px;top:216.35px;width:8.4px;height:6.1px;border-radius:50%;background:#2680eb"></div>
<svg style="position:absolute;left:814.1px;top:228.4px;" width="11.5" height="7.599999999999994" viewBox="0 0 11.5 7.599999999999994"><rect x="0" y="0" width="11.5" height="7.599999999999994" rx="1.2" fill="#2680eb"/><path d="M2.76 3.799999999999997 L4.945 5.471999999999996 L9.200000000000001 2.0519999999999987" fill="none" stroke="#fff" stroke-width="1.05"/></svg>
<div style="position:absolute;left:902.5px;top:231px;width:47.9px;height:2px;background:#c8c8cc;border-radius:1px;"></div>
<div style="position:absolute;left:902.5px;top:230.85px;width:29.9px;height:2.3px;background:#2680eb;border-radius:1px;"></div>
<div style="position:absolute;left:928.1999999999999px;top:229.04999999999998px;width:8.4px;height:6.1px;border-radius:50%;background:#2680eb"></div>
<div style="position:absolute;left:902px;top:241.5px;width:65.6px;height:9.5px;background:#f8f8f9;border-radius:1px;"></div>
<svg style="position:absolute;left:956px;top:244.8px;" width="6.4" height="3.4" viewBox="0 0 6.4 3.4"><path d="M0.5 0.4 L3.2 3.0 L5.9 0.4" fill="none" stroke="#555" stroke-width="1.1"/></svg>
<div style="position:absolute;left:802px;top:254.6px;width:176px;height:1.0px;background:#e6e6e9;"></div>
<svg style="position:absolute;left:956.0px;top:260.15999999999997px;" width="9" height="6.4799999999999995" viewBox="0 0 9 6.4799999999999995"><path d="M0 3.2399999999999998 H9 M4.5 0 V6.4799999999999995" stroke="#555" stroke-width="1"/></svg>
<div style="position:absolute;left:802px;top:270.4px;width:176px;height:1.0px;background:#e6e6e9;"></div>
<div style="position:absolute;left:812px;top:276px;width:9px;height:6px;border-radius:50%;background:#e03a3a"></div>
<div style="position:absolute;left:812px;top:288.1px;width:9px;height:6px;border-radius:50%;background:#2ea84f"></div>
<div style="position:absolute;left:812px;top:300.4px;width:9px;height:6px;border-radius:50%;background:#8a3be0"></div>
<svg style="position:absolute;left:960.0px;top:301.23999999999995px;" width="6" height="4.32" viewBox="0 0 6 4.32"><path d="M0 2.16 H6 M3.0 0 V4.32" stroke="#2d86e6" stroke-width="1"/></svg>
<div style="position:absolute;left:812px;top:313.1px;width:9px;height:6px;border-radius:50%;background:#2680eb"></div>
<div style="position:absolute;left:802px;top:323px;width:176px;height:1px;background:#e6e6e9;"></div>
<svg style="position:absolute;left:956.0px;top:328.36px;" width="9" height="6.4799999999999995" viewBox="0 0 9 6.4799999999999995"><path d="M0 3.2399999999999998 H9 M4.5 0 V6.4799999999999995" stroke="#555" stroke-width="1"/></svg>
<div style="position:absolute;left:878.5px;top:344px;width:65.1px;height:2px;background:#c8c8cc;border-radius:1px;"></div>
<div style="position:absolute;left:878.5px;top:343.85px;width:18.8px;height:2.3px;background:#2680eb;border-radius:1px;"></div>
<div style="position:absolute;left:893.0999999999999px;top:342.25px;width:8.4px;height:6.1px;border-radius:50%;background:#2680eb"></div>
<div style="position:absolute;left:878.5px;top:356px;width:65.1px;height:2px;background:#c8c8cc;border-radius:1px;"></div>
<div style="position:absolute;left:878.5px;top:355.85px;width:27.5px;height:2.3px;background:#2680eb;border-radius:1px;"></div>
<div style="position:absolute;left:901.8px;top:353.95px;width:8.4px;height:6.1px;border-radius:50%;background:#2680eb"></div>
<div style="position:absolute;left:878.5px;top:368px;width:65.1px;height:2px;background:#c8c8cc;border-radius:1px;"></div>
<div style="position:absolute;left:908.0999999999999px;top:365.75px;width:8.4px;height:6.1px;border-radius:50%;background:#2680eb"></div>
<div style="position:absolute;left:878.5px;top:380px;width:65.1px;height:2px;background:#c8c8cc;border-radius:1px;"></div>
<div style="position:absolute;left:922.1999999999999px;top:377.45px;width:8.4px;height:6.1px;border-radius:50%;background:#2680eb"></div>
<div style="position:absolute;left:802px;top:387px;width:176px;height:1px;background:#e6e6e9;"></div>
<svg style="position:absolute;left:956.0px;top:391.86px;" width="9" height="6.4799999999999995" viewBox="0 0 9 6.4799999999999995"><path d="M0 3.2399999999999998 H9 M4.5 0 V6.4799999999999995" stroke="#555" stroke-width="1"/></svg>
<svg style="position:absolute;left:812.3px;top:405.8px;" width="11.300000000000068" height="7.399999999999977" viewBox="0 0 11.300000000000068 7.399999999999977"><rect x="0" y="0" width="11.300000000000068" height="7.399999999999977" rx="1.2" fill="#2680eb"/><path d="M2.712000000000016 3.6999999999999886 L4.859000000000029 5.327999999999983 L9.040000000000054 1.997999999999994" fill="none" stroke="#fff" stroke-width="1.05"/></svg>
<svg style="position:absolute;left:812.3px;top:418px;" width="11.300000000000068" height="7.399999999999977" viewBox="0 0 11.300000000000068 7.399999999999977"><rect x="0" y="0" width="11.300000000000068" height="7.399999999999977" rx="1.2" fill="#2680eb"/><path d="M2.712000000000016 3.6999999999999886 L4.859000000000029 5.327999999999983 L9.040000000000054 1.997999999999994" fill="none" stroke="#fff" stroke-width="1.05"/></svg>
<svg style="position:absolute;left:812.3px;top:431.7px;" width="11.100000000000023" height="7.300000000000011" viewBox="0 0 11.100000000000023 7.300000000000011"><rect x="0.45" y="0.45" width="10.200000000000022" height="6.400000000000011" rx="1.2" fill="#f3f3f4" stroke="#777" stroke-width="1.1"/></svg>
<div style="position:absolute;left:878.5px;top:434px;width:65.1px;height:2px;background:#c8c8cc;border-radius:1px;"></div>
<div style="position:absolute;left:918.5px;top:432.45px;width:8.4px;height:6.1px;border-radius:50%;background:#2680eb"></div>
<svg id="char" style="position:absolute;left:480px;top:140px" width="140" height="292" viewBox="480 140 140 292"><defs><filter id="bl" x="-5%" y="-5%" width="110%" height="110%"><feGaussianBlur stdDeviation="0.45"/></filter><radialGradient id="gy"><stop offset="0" stop-color="#fff36a"/><stop offset="0.55" stop-color="#f7d414"/><stop offset="1" stop-color="#e6b800" stop-opacity="0.85"/></radialGradient><radialGradient id="go"><stop offset="0" stop-color="#ffd23a"/><stop offset="0.5" stop-color="#ffae12"/><stop offset="1" stop-color="#f07a10" stop-opacity="0.9"/></radialGradient><radialGradient id="gp"><stop offset="0" stop-color="#ffffff"/><stop offset="0.35" stop-color="#e9e0ff"/><stop offset="0.6" stop-color="#6b3df0"/><stop offset="1" stop-color="#3a2fd0" stop-opacity="0.85"/></radialGradient><radialGradient id="gg"><stop offset="0" stop-color="#ffffff"/><stop offset="0.42" stop-color="#eafff0"/><stop offset="0.6" stop-color="#2fd36a"/><stop offset="1" stop-color="#1fae54" stop-opacity="0.9"/></radialGradient></defs><g filter="url(#bl)"><path d="M528.6 404.2 Q531.4 404 533.6 407 Q538 409.4 541.8 407.2 Q543.4 406.8 544.2 408.6 L545.2 417.6 Q545.4 419.6 543 419.9 L500 420.8 Q496 420.6 496 418.6 Q496.4 415.4 503 413.6 Q515 410.2 528.6 404.2 Z" fill="#3d3b33"/><path d="M496 418.6 Q496.4 415.4 503 413.6 Q507.4 412.4 511.2 411 Q513.4 413.4 512.8 417.8 L498 419.6 Z" fill="#d3cdc2"/><path d="M496 417.9 L545.2 415.9 L545.3 418.2 Q545.3 420.7 542 421.1 L502 422.4 Q496 422.4 496 417.9 Z" fill="#cbc6bc"/><path d="M496.2 419.6 L545.3 417.6" stroke="#a9a49a" stroke-width="0.5" fill="none"/><path d="M511.5 411.4 L528.8 404.6 M514.6 412.6 L519.4 407.4 M518.8 411.6 L523 406 M522.8 410.4 L526.4 404.8 M526.6 409 L529.6 404.6" stroke="#e9e5dd" stroke-width="1" fill="none"/><path d="M565.6 409.8 Q566.4 406.6 569.8 406 Q573 408.6 577.4 406.6 Q586 411.6 594.4 416.6 Q598.6 418.6 598.6 421.2 Q598.6 423.6 594 423.4 L572 421.4 Q565.6 420 565.4 417 Z" fill="#3d3b33"/><path d="M582 416.4 Q588 416 593.4 417.2 Q598.6 418.8 598.6 421.2 L584.6 421 Q582 419 582 416.4 Z" fill="#d3cdc2"/><path d="M565.4 416.6 Q578 420 598.6 420.6 Q599 425 593 425 L572 423 Q565.4 421.6 565.4 417.8 Z" fill="#cbc6bc"/><path d="M565.6 418.6 Q580 422.4 598.6 422.6" stroke="#a9a49a" stroke-width="0.5" fill="none"/><path d="M574 407 L587.4 415.4 M572.6 410 L577.4 407.4 M575.6 412 L580.6 409.4 M578.8 414 L583.6 411.6 M582 415.6 L586.4 413.6" stroke="#e9e5dd" stroke-width="1" fill="none"/><path d="M532.8 400 L541.6 400 L541.8 409.4 Q537 411 533.4 407.6 Z" fill="#e7ae88"/><path d="M568 400 L576.8 400 L577.6 407.6 Q573 409.6 569.4 407 Z" fill="#e7ae88"/><path d="M517.2 271 L564 270 Q566.6 300 570.8 341 Q574.6 368 578.8 397.6 L565 398 Q561 372 556.3 341.3 Q549 312 539 283.4 Q538.2 312 539.6 341.3 Q541.6 372 543.8 397.6 L529.5 397.8 Q527.6 370 524.5 341.3 Q520.2 310 517.5 284 Z" fill="#2f4858"/><path d="M536.4 300 Q536.2 322 537 341 Q538.6 372 540.6 397.6 L543.8 397.6 Q541.6 372 539.6 341.3 Q538.2 312 539 283.4 Z" fill="#233746" opacity="0.75"/><path d="M564.6 281 Q567.4 308 570.8 341 Q574.6 368 578.8 397.6 L575.4 397.6 Q571.4 368 567.8 341 Q564.6 310 561.8 284 Z" fill="#233746" opacity="0.7"/><path d="M521 296 Q524.6 322 527.2 341 Q530.2 370 532 397.6 L535.4 397.6 Q533.2 370 530.6 341 Q528.4 322 525 296 Z" fill="#3c5869" opacity="0.4"/><path d="M545 296 Q552 322 558.6 341 Q563.6 370 567.6 397.6 L570.6 397.6 Q566.6 370 561.8 341 Q556 322 549.4 296 Z" fill="#3c5869" opacity="0.4"/><path d="M527.6 396.2 L544.4 395.8 L544.8 401.3 L528 401.7 Z" fill="#67798d"/><path d="M563.8 396.8 L579.8 396.4 L580.4 402.2 L564.4 402.6 Z" fill="#67798d"/><path d="M509.4 250 L517 251 Q516.2 268 515 283 Q518.4 290 519.4 297 Q520.4 304 518.6 309.6 Q516.8 311.4 514.6 309.6 Q512.6 310.4 510.6 308 Q506 302 504.4 294 Q504 287 507.4 282.4 Q508 266 509.4 250 Z" fill="#e7ae88"/><path d="M515 283 Q517.4 292 517 300 Q516.6 306 514.6 309.6 Q516.8 311.4 518.6 309.6 Q520.4 304 519.4 297 Q518.4 290 515 283 Z" fill="#c98c66" opacity="0.85"/><path d="M507.6 286 Q506.4 292 508 298 Q510 304 512.6 307.6" stroke="#c98c66" stroke-width="0.6" fill="none" opacity="0.7"/><path d="M578 243 L588.4 249.6 Q578 262 566.6 272.4 Q561 277 556.4 275.6 Q553 273.6 556 270.6 Q563 264 571.6 252.6 Z" fill="#e7ae88"/><path d="M561 266.6 Q565 265.6 568.4 268.8 Q569.4 271.6 566.6 273.6 Q562.6 273 560 270 Z" fill="#2a2623"/><path d="M529.6 199 L546 199 L545 269.6 L524.6 270 Q527 236 529.6 199 Z" fill="#ece5db"/><path d="M529.8 203 Q535.8 207.4 544 203.4 L544 200 L530 200 Z" fill="#d9d0c4"/><path d="M532.4 183 L544.8 183 Q544.4 193 546.4 199.6 Q538.6 205.4 530.6 200.2 Q533 193 532.4 183 Z" fill="#e7ae88"/><path d="M532.4 184.6 Q538 190.6 544.8 186 L544.7 190 Q538 194.8 532.6 189.4 Z" fill="#c98c66" opacity="0.75"/><path d="M559 199.6 Q568 200.4 571.6 206 Q577 220 583.4 233.6 Q588.6 241 590 247 Q588.6 250.8 585.4 252 L575.4 247.4 Q573.4 244.8 574.4 242.4 Q569.8 234.6 565.8 226.2 Z" fill="#cfb592"/><path d="M565.8 226.2 Q569.8 234.6 574.4 242.4 Q573.4 244.8 575.4 247.4 L579 249.2 Q576 243 573 236 Q570 228 568 220 Z" fill="#b99c78" opacity="0.85"/><path d="M576.6 239.4 Q583 240 589.4 245" stroke="#b99c78" stroke-width="0.9" fill="none"/><path d="M524 199.8 Q517.4 201 515.2 206.6 Q511.6 222 510 240 Q508.6 247 508.8 252.4 Q512.6 254.6 517.8 253.2 Q518.6 246 519.4 240 Q520.8 228 523.4 216 Z" fill="#cfb592"/><path d="M519.4 240 Q520.8 228 523.4 216 L521 214 Q518.4 228 517 240 Q516.4 247 516.2 253.4 L517.8 253.2 Q518.6 246 519.4 240 Z" fill="#b99c78" opacity="0.8"/><path d="M531.4 195.4 Q524 198 519.6 202.6 Q518.6 230 516.2 256 Q515.6 266 515.2 275.4 Q520 274.4 525.4 271.6 Q527.6 240 531.6 207 Z" fill="#cfb592"/><path d="M531.6 207 Q527.6 240 525.4 271.6 L523.4 272.6 Q525.4 240 529.4 207 Z" fill="#b99c78"/><path d="M544.6 194.6 Q554 197 563 200.6 Q566.6 204 566.6 210 Q566 228 565.2 240 Q564.2 256 562.4 268 Q556 271.6 548.6 271.8 Q545.6 271.8 543.4 270.6 Q542.6 236 542.4 206 Z" fill="#cfb592"/><path d="M542.4 206 Q542.6 236 543.4 270.6 L545.2 271.4 Q544.4 236 544.2 206 Z" fill="#b99c78"/><path d="M565.2 222 Q566 232 565.2 240 Q564.2 256 562.4 268 L559.4 269.6 Q561.6 254 562.4 240 Q563 230 562.6 222 Z" fill="#b99c78" opacity="0.7"/><path d="M546.8 216 L560.4 216 L560.4 229.4 L553.6 231.4 L546.8 229.4 Z" fill="none" stroke="#b99c78" stroke-width="0.7"/><path d="M546.8 219.4 L560.4 219.4" stroke="#b99c78" stroke-width="0.6"/><path d="M531.8 194.4 L529 197.6 L533.4 207.6 L536.4 202 Z" fill="#dcc6a6" stroke="#b99c78" stroke-width="0.4"/><path d="M544.4 193.6 L550 196 L552.4 204.6 L543.4 200.6 Z" fill="#dcc6a6" stroke="#b99c78" stroke-width="0.4"/><ellipse cx="518" cy="176.2" rx="2.9" ry="3.8" fill="#e7ae88"/><ellipse cx="518.2" cy="176.4" rx="1.4" ry="2.1" fill="#c98c66" opacity="0.7"/><ellipse cx="556.4" cy="172.4" rx="3" ry="4.4" fill="#e7ae88"/><ellipse cx="556.3" cy="172.6" rx="1.5" ry="2.5" fill="#c98c66" opacity="0.7"/><path d="M520 160 Q519.2 170 521.4 177 Q525 184.6 533 186.8 Q540 188.2 546 184 Q552.6 178 553.4 169 Q554 162 552.6 156.6 L524 155 Z" fill="#e7ae88"/><path d="M546 184 Q552.6 178 553.4 169 Q553.8 164 553.2 160 Q551 172 546 178.6 Q541 184.6 534 186.9 Q540 188.2 546 184 Z" fill="#c98c66" opacity="0.55"/><ellipse cx="530" cy="176" rx="5" ry="4" fill="#f3c4a2" opacity="0.45"/><path d="M519.2 168.6 Q518 166 517.4 163.8 Q514.6 161.6 511.2 158.3 Q513.6 157.4 514.8 155 Q513.4 153 513.5 150.8 Q516 150.6 518.6 149.2 Q520.6 147.4 523.1 146.4 Q525 145.2 527.6 144.9 Q529.6 145.4 532.1 145.2 Q535 144.2 537.7 144.6 Q540.2 144.8 542.2 145.9 Q543.6 146.4 544.5 147.6 Q546.4 148 547.9 149.2 Q551.4 150.6 553.5 153.7 Q556 154.8 557.5 157.1 Q557.6 160 556.3 162.4 Q555.4 165.6 553.5 168 Q553 164.6 551.8 162.2 Q550.2 160 547.9 158.7 Q545.8 157.6 543.4 157.7 Q539.6 159.4 535.5 159.5 Q532 159.6 528.7 158.8 Q525.6 159.2 523.1 160.5 Q521.4 162 520.3 163.9 Q519.6 166 519.2 168.6 Z" fill="#3a2a23"/><path d="M519 152.6 Q525 148 533 148.4 Q541 148.6 547 152.4" stroke="#5a463e" stroke-width="1.1" fill="none" opacity="0.55"/><path d="M522 156 Q530 152.6 540 153.6" stroke="#5a463e" stroke-width="0.8" fill="none" opacity="0.45"/><path d="M521.4 164.6 Q525 162.6 529.4 163.4" stroke="#3a2a23" stroke-width="1.2" fill="none" stroke-linecap="round"/><path d="M537.2 161.2 Q542 159.4 547.4 162" stroke="#3a2a23" stroke-width="1.3" fill="none" stroke-linecap="round"/><ellipse cx="526.5" cy="170" rx="2.9" ry="2.5" fill="#f3ebe4"/><ellipse cx="526.9" cy="170.2" rx="1.9" ry="2" fill="#3a261d"/><circle cx="527.4" cy="169.5" r="0.5" fill="#fff"/><ellipse cx="541.8" cy="167.8" rx="3.1" ry="2.6" fill="#f3ebe4"/><ellipse cx="541.7" cy="168" rx="2" ry="2.1" fill="#3a261d"/><circle cx="542.3" cy="167.3" r="0.5" fill="#fff"/><path d="M533 169 Q531.6 174 533.6 175.6 Q536 176.2 536.6 174.4" fill="#e8935c" opacity="0.9"/><path d="M527.4 177.6 Q535 182.6 544.6 176.2" stroke="#a85f45" stroke-width="0.9" fill="none" stroke-linecap="round"/><path d="M530 179.6 Q535.4 183 541.6 179" stroke="#f1ddd0" stroke-width="0.9" fill="none"/><circle cx="520.6" cy="170.6" r="0.5" fill="#fff" opacity="0.6"/><circle cx="522.6" cy="177.6" r="0.5" fill="#fff" opacity="0.6"/><circle cx="526.6" cy="182.4" r="0.5" fill="#fff" opacity="0.6"/><circle cx="533" cy="185.2" r="0.5" fill="#fff" opacity="0.6"/><circle cx="539.6" cy="184.4" r="0.5" fill="#fff" opacity="0.6"/><circle cx="545" cy="180.6" r="0.5" fill="#fff" opacity="0.6"/><circle cx="548.6" cy="175.6" r="0.5" fill="#fff" opacity="0.6"/><circle cx="536" cy="178.4" r="0.5" fill="#fff" opacity="0.6"/><circle cx="541.4" cy="181.6" r="0.5" fill="#fff" opacity="0.6"/><circle cx="531" cy="180.4" r="0.5" fill="#fff" opacity="0.6"/><circle cx="538.6" cy="175.6" r="0.5" fill="#fff" opacity="0.6"/><circle cx="529" cy="175.4" r="0.5" fill="#fff" opacity="0.6"/></g><g filter="url(#bl)"><path d="M513.2 252 L509.8 280" stroke="#8fe28f" stroke-width="3.6" opacity="0.5" fill="none"/><path d="M513.4 249 L509.6 281" stroke="#5fd46f" stroke-width="1.1" opacity="0.7" fill="none"/><path d="M579.6 248 L568.4 261.6" stroke="#8fe28f" stroke-width="3.4" opacity="0.4" fill="none"/><path d="M579 236.6 L581 245.4 L567.8 262" stroke="#4fd06a" stroke-width="1.2" opacity="0.8" fill="none"/><path d="M507.6 281.4 L511.6 281.8" stroke="#35c45a" stroke-width="1.6"/><path d="M565.8 260.6 L569.6 263.2" stroke="#35c45a" stroke-width="1.6"/><path d="M577.4 237.4 L581.2 236" stroke="#35c45a" stroke-width="1.4"/><path d="M523.1 281 L535.3 278.8" stroke="#4a4a3a" stroke-width="0.7" stroke-dasharray="1 0.8"/><ellipse cx="520.8" cy="206.3" rx="3.3" ry="2.7" fill="url(#gy)"/><ellipse cx="565.2" cy="204.3" rx="3.4" ry="2.8" fill="url(#gy)"/><circle cx="513.4" cy="249" r="3.9" fill="url(#gg)"/><circle cx="580.9" cy="245.5" r="3.9" fill="url(#gg)"/><ellipse cx="523.1" cy="281" rx="3.2" ry="2.8" fill="url(#gy)"/><ellipse cx="535.3" cy="278.8" rx="3.2" ry="2.8" fill="url(#gy)"/><ellipse cx="553.2" cy="275.2" rx="3.6" ry="3" fill="url(#go)"/><ellipse cx="530.8" cy="341.2" rx="3.6" ry="3" fill="url(#go)"/><ellipse cx="564.2" cy="341.2" rx="3.6" ry="3" fill="url(#go)"/><ellipse cx="535.2" cy="398.6" rx="3.4" ry="3" fill="url(#gp)"/><ellipse cx="571.8" cy="398.8" rx="3.4" ry="3" fill="url(#gp)"/><ellipse cx="574" cy="407" rx="3" ry="2.6" fill="url(#gp)"/><ellipse cx="531.6" cy="161.6" rx="2.2" ry="1.9" fill="#fff" stroke="#9a9a9a" stroke-width="0.5"/></g></svg>
<div class="t" style="left:59.94px;top:114px;color:#cfcfff;font-size:10px;font-weight:700;transform:translateY(0.8px) rotate(0.03deg) scaleX(1.2008)">Ch</div>
<div class="t" style="left:381.73px;top:115px;color:#2b2b2b;font-size:7.9px;font-weight:400;-webkit-text-stroke:0.28px #2b2b2b;transform:translateY(1.08px) rotate(0.03deg) scaleX(1.4651)">File</div>
<div class="t" style="left:416.51px;top:115px;color:#2b2b2b;font-size:7.9px;font-weight:400;-webkit-text-stroke:0.28px #2b2b2b;transform:translateY(1.08px) rotate(0.03deg) scaleX(1.4862)">Edit</div>
<div class="t" style="left:452.7px;top:115px;color:#2b2b2b;font-size:7.9px;font-weight:400;-webkit-text-stroke:0.28px #2b2b2b;transform:translateY(1.08px) rotate(0.03deg) scaleX(1.3785)">Scene</div>
<div class="t" style="left:498.91px;top:115px;color:#2a7bd6;font-size:7.9px;font-weight:400;-webkit-text-stroke:0.28px #2a7bd6;transform:translateY(1.08px) rotate(0.03deg) scaleX(1.5)">Puppet</div>
<div class="t" style="left:552.38px;top:115px;color:#2b2b2b;font-size:7.9px;font-weight:400;-webkit-text-stroke:0.28px #2b2b2b;transform:translateY(1.08px) rotate(0.03deg) scaleX(1.5)">Timeline</div>
<div class="t" style="left:611.92px;top:115px;color:#2b2b2b;font-size:7.9px;font-weight:400;-webkit-text-stroke:0.28px #2b2b2b;transform:translateY(1.08px) rotate(0.03deg) scaleX(1.4868)">Window</div>
<div class="t" style="left:668.73px;top:115px;color:#2b2b2b;font-size:7.9px;font-weight:400;-webkit-text-stroke:0.28px #2b2b2b;transform:translateY(1.09px) rotate(0.03deg) scaleX(1.4707)">Help</div>
<div class="t" style="left:58.71px;top:138px;color:#222;font-size:6.9px;font-weight:700;transform:translateY(0.64px) rotate(0.03deg) scaleX(1.483)">Project</div>
<div class="t" style="left:85.82px;top:153px;color:#333;font-size:6.5px;font-weight:700;transform:translateY(0.96px) rotate(0.03deg) scaleX(1.445)">Name</div>
<div class="t" style="left:85.82px;top:167px;color:#333;font-size:6.5px;font-weight:700;transform:translateY(0.96px) rotate(0.03deg) scaleX(1.406)">History</div>
<div class="t" style="left:85.8px;top:181px;color:#333;font-size:6.5px;font-weight:700;transform:translateY(0.46px) rotate(0.03deg) scaleX(1.3585)">tall_character.psd</div>
<div class="t" style="left:58.82px;top:197px;color:#222;font-size:6.9px;font-weight:700;transform:translateY(0.85px) rotate(0.03deg) scaleX(1.3292)">Layers</div>
<div class="t" style="left:83.28px;top:210px;color:#3a3a3a;font-size:6.8px;font-weight:700;transform:translateY(1.35px) rotate(0.03deg) scaleX(1.1589)">tall_character</div>
<div class="t" style="left:89.33px;top:222px;color:#3a3a3a;font-size:6.8px;font-weight:700;transform:translateY(0.45px) rotate(0.03deg) scaleX(1.2265)">Head</div>
<div class="t" style="left:103.97px;top:232px;color:#3a3a3a;font-size:6.6px;font-weight:700;transform:translateY(0.65px) rotate(0.03deg) scaleX(1.138)">Head Mesh</div>
<div class="t" style="left:104.58px;top:242px;color:#3a3a3a;font-size:6.6px;font-weight:700;transform:translateY(0.46px) rotate(0.03deg) scaleX(1.1902)">Hair</div>
<div class="t" style="left:104.6px;top:252px;color:#3a3a3a;font-size:6.6px;font-weight:700;transform:translateY(0.45px) rotate(0.03deg) scaleX(1.0904)">Face</div>
<div class="t" style="left:107.87px;top:262px;color:#3a3a3a;font-size:6.6px;font-weight:700;transform:translateY(0.36px) rotate(0.03deg) scaleX(1.1467)">Left Eye</div>
<div class="t" style="left:107.81px;top:272px;color:#3a3a3a;font-size:6.6px;font-weight:700;transform:translateY(0.36px) rotate(0.03deg) scaleX(1.1441)">Right Eye</div>
<div class="t" style="left:107.85px;top:282px;color:#3a3a3a;font-size:6.6px;font-weight:700;transform:translateY(0.35px) rotate(0.03deg) scaleX(1.1616)">Left Eyebrow</div>
<div class="t" style="left:107.8px;top:292px;color:#3a3a3a;font-size:6.6px;font-weight:700;transform:translateY(0.25px) rotate(0.03deg) scaleX(1.1544)">Right Eyebrow</div>
<div class="t" style="left:107.92px;top:301px;color:#3a3a3a;font-size:6.6px;font-weight:700;transform:translateY(0.86px) rotate(0.03deg) scaleX(1.12)">Nose</div>
<div class="t" style="left:107.85px;top:311px;color:#3a3a3a;font-size:6.6px;font-weight:700;transform:translateY(0.45px) rotate(0.03deg) scaleX(1.133)">Mouth</div>
<div class="t" style="left:107.47px;top:320px;color:#3a3a3a;font-size:6.6px;font-weight:700;transform:translateY(1.15px) rotate(0.03deg) scaleX(1.0462)">Ears</div>
<div class="t" style="left:88.79px;top:331px;color:#3a3a3a;font-size:6.8px;font-weight:700;transform:translateY(0.55px) rotate(0.03deg) scaleX(1.0991)">Body</div>
<div class="t" style="left:100.72px;top:341px;color:#3a3a3a;font-size:6.6px;font-weight:700;transform:translateY(0.65px) rotate(0.03deg) scaleX(1.0767)">Torso</div>
<div class="t" style="left:101.21px;top:351px;color:#3a3a3a;font-size:6.6px;font-weight:700;transform:translateY(0.45px) rotate(0.03deg) scaleX(1.1298)">Neck</div>
<div class="t" style="left:88.52px;top:361px;color:#3a3a3a;font-size:6.8px;font-weight:700;transform:translateY(0.45px) rotate(0.03deg) scaleX(1.0809)">Arms</div>
<div class="t" style="left:99.64px;top:370px;color:#3a3a3a;font-size:6.2px;font-weight:700;transform:translateY(0.41px) rotate(0.03deg) scaleX(1.2506)">Left Arm</div>
<div class="t" style="left:112.16px;top:378px;color:#3a3a3a;font-size:5.7px;font-weight:700;transform:translateY(1.5px) rotate(0.03deg) scaleX(1.1922)">Left Shoulder</div>
<div class="t" style="left:112.16px;top:386px;color:#3a3a3a;font-size:5.7px;font-weight:700;transform:translateY(1.5px) rotate(0.03deg) scaleX(1.1816)">Left Elbow</div>
<div class="t" style="left:112.17px;top:395px;color:#3a3a3a;font-size:5.7px;font-weight:700;transform:translateY(0.7px) rotate(0.03deg) scaleX(1.1759)">Left Wrist</div>
<div class="t" style="left:107.11px;top:403px;color:#3a3a3a;font-size:6.2px;font-weight:700;transform:translateY(0.81px) rotate(0.03deg) scaleX(1.1176)">Right Arm</div>
<div class="t" style="left:112.07px;top:412px;color:#3a3a3a;font-size:5.7px;font-weight:700;transform:translateY(1.3px) rotate(0.03deg) scaleX(1.189)">Right Shoulder</div>
<div class="t" style="left:112.05px;top:420px;color:#3a3a3a;font-size:5.7px;font-weight:700;transform:translateY(1.5px) rotate(0.03deg) scaleX(1.1848)">Right Elbow</div>
<div class="t" style="left:112.08px;top:429px;color:#3a3a3a;font-size:5.7px;font-weight:700;transform:translateY(0.9px) rotate(0.03deg) scaleX(1.1677)">Right Wrist</div>
<div class="t" style="left:89.03px;top:440px;color:#3a3a3a;font-size:5.9px;font-weight:700;transform:translateY(0.92px) rotate(0.03deg) scaleX(1.1651)">Legs</div>
<div class="t" style="left:98.28px;top:449px;color:#3a3a3a;font-size:5.6px;font-weight:700;transform:translateY(0.61px) rotate(0.03deg) scaleX(1.2001)">Left Leg</div>
<div class="t" style="left:112.21px;top:456px;color:#3a3a3a;font-size:5.3px;font-weight:700;transform:translateY(1.2px) rotate(0.03deg) scaleX(1.2483)">Left Hip</div>
<div class="t" style="left:112.26px;top:464px;color:#3a3a3a;font-size:5.3px;font-weight:700;transform:translateY(0.39px) rotate(0.03deg) scaleX(1.2341)">Left Knee</div>
<div class="t" style="left:112.27px;top:471px;color:#3a3a3a;font-size:5.3px;font-weight:700;transform:translateY(0.6px) rotate(0.03deg) scaleX(1.2224)">Left Ankle</div>
<div class="t" style="left:106.64px;top:478px;color:#3a3a3a;font-size:5.6px;font-weight:700;transform:translateY(1.2px) rotate(0.03deg) scaleX(1.1624)">Right Leg</div>
<div class="t" style="left:112.07px;top:485px;color:#3a3a3a;font-size:5.3px;font-weight:700;transform:translateY(1.1px) rotate(0.03deg) scaleX(1.2376)">Right Hip</div>
<div class="t" style="left:112.08px;top:492px;color:#3a3a3a;font-size:5.3px;font-weight:700;transform:translateY(0.89px) rotate(0.03deg) scaleX(1.2189)">Right Knee</div>
<div class="t" style="left:112.07px;top:500px;color:#3a3a3a;font-size:5.3px;font-weight:700;transform:translateY(0.3px) rotate(0.03deg) scaleX(1.2414)">Right Ankle</div>
<div class="t" style="left:232.92px;top:136px;color:#8a8a8c;font-size:10.6px;font-weight:700;transform:translateY(0.01px) rotate(0.03deg) scaleX(1.4218)">Step 2:</div>
<div class="t" style="left:286.4px;top:136px;color:#161616;font-size:10.6px;font-weight:700;transform:translateY(0.01px) rotate(0.03deg) scaleX(1.4089)">Create Character Puppet</div>
<div class="t" style="left:245.94px;top:159px;color:#444;font-size:6.6px;font-weight:700;transform:translateY(0.95px) rotate(0.03deg) scaleX(1.2346)">LIVE Face Tracking Active</div>
<div class="t" style="left:644.07px;top:435px;color:#333;font-size:6.5px;font-weight:700;transform:translateY(0.96px) rotate(0.03deg) scaleX(1.4055)">1.0x</div>
<div class="t" style="left:241.36px;top:453px;color:#2e2e2e;font-size:7px;font-weight:700;transform:translateY(-0.26px) rotate(0.03deg) scaleX(1.3627)">Triggers</div>
<div class="t" style="left:241.14px;top:469px;color:#2e2e2e;font-size:7px;font-weight:700;transform:translateY(0.35px) rotate(0.03deg) scaleX(1.3879)">Behaviors</div>
<div class="t" style="left:526.87px;top:514px;color:#444;font-size:6.9px;font-weight:700;transform:translateY(1.45px) rotate(0.03deg) scaleX(1.3582)">Drop behaviors here</div>
<div class="t" style="left:812.41px;top:138px;color:#222;font-size:7.4px;font-weight:700;transform:translateY(0.02px) rotate(0.03deg) scaleX(1.3952)">Properties</div>
<div class="t" style="left:817.08px;top:154px;color:#2a7bd6;font-size:7px;font-weight:400;-webkit-text-stroke:0.28px #2a7bd6;transform:translateY(0.09px) rotate(0.03deg) scaleX(1.3911)">Rig</div>
<div class="t" style="left:850.31px;top:154px;color:#2c2c2c;font-size:7px;font-weight:400;-webkit-text-stroke:0.28px #2c2c2c;transform:translateY(0.09px) rotate(0.03deg) scaleX(1.317)">Record</div>
<div class="t" style="left:898.4px;top:154px;color:#2c2c2c;font-size:7px;font-weight:400;-webkit-text-stroke:0.28px #2c2c2c;transform:translateY(0.09px) rotate(0.03deg) scaleX(1.3617)">Stream</div>
<div class="t" style="left:812.54px;top:171px;color:#222;font-size:7.2px;font-weight:700;transform:translateY(-0.28px) rotate(0.03deg) scaleX(1.2327)">Puppet</div>
<div class="t" style="left:835.86px;top:185px;color:#333;font-size:6.1px;font-weight:700;transform:translateY(0.72px) rotate(0.03deg) scaleX(1.3131)">tall_character</div>
<div class="t" style="left:813.63px;top:201px;color:#2c2c2c;font-size:6.6px;font-weight:700;transform:translateY(0.85px) rotate(0.03deg) scaleX(1.2695)">Mesh Shape</div>
<div class="t" style="left:925.68px;top:201px;color:#333;font-size:6.1px;font-weight:700;transform:translateY(0.72px) rotate(0.03deg) scaleX(1.335)">Auto</div>
<div class="t" style="left:831.66px;top:216px;color:#2c2c2c;font-size:6.1px;font-weight:400;-webkit-text-stroke:0.28px #2c2c2c;transform:translateY(0.16px) rotate(0.03deg) scaleX(1.3372)">Mesh Expansion</div>
<div class="t" style="left:959.26px;top:216px;color:#2d86e6;font-size:6.1px;font-weight:400;transform:translateY(0.28px) rotate(0.03deg) scaleX(1.2516)">25</div>
<div class="t" style="left:831.62px;top:229px;color:#2c2c2c;font-size:6.1px;font-weight:400;-webkit-text-stroke:0.28px #2c2c2c;transform:translateY(-0.14px) rotate(0.03deg) scaleX(1.3727)">Mesh Smoothing</div>
<div class="t" style="left:959.53px;top:229px;color:#2d86e6;font-size:6.1px;font-weight:400;transform:translateY(-0.02px) rotate(0.03deg) scaleX(1.2116)">65</div>
<div class="t" style="left:813.75px;top:243px;color:#2c2c2c;font-size:6.1px;font-weight:400;-webkit-text-stroke:0.28px #2c2c2c;transform:translateY(-0.04px) rotate(0.03deg) scaleX(1.3506)">Mesh Density</div>
<div class="t" style="left:906.6px;top:243px;color:#333;font-size:6.1px;font-weight:700;transform:translateY(0.01px) rotate(0.03deg) scaleX(1.2957)">Standard</div>
<div class="t" style="left:812.55px;top:259px;color:#222;font-size:7.2px;font-weight:700;transform:translateY(0.52px) rotate(0.03deg) scaleX(1.1771)">Behaviors</div>
<div class="t" style="left:827.34px;top:275px;color:#2c2c2c;font-size:6.1px;font-weight:400;-webkit-text-stroke:0.28px #2c2c2c;transform:translateY(0.75px) rotate(0.03deg) scaleX(1.3557)">Dragger</div>
<div class="t" style="left:959.04px;top:275px;color:#2d86e6;font-size:6.1px;font-weight:400;transform:translateY(0.87px) rotate(0.03deg) scaleX(1.2621)">20</div>
<div class="t" style="left:827.37px;top:288px;color:#2c2c2c;font-size:6.1px;font-weight:400;-webkit-text-stroke:0.28px #2c2c2c;transform:translateY(-0.15px) rotate(0.03deg) scaleX(1.2223)">Eye Gaze</div>
<div class="t" style="left:959.28px;top:288px;color:#2d86e6;font-size:6.1px;font-weight:400;transform:translateY(-0.03px) rotate(0.03deg) scaleX(1.2267)">50</div>
<div class="t" style="left:827.47px;top:300px;color:#2c2c2c;font-size:6.1px;font-weight:400;-webkit-text-stroke:0.28px #2c2c2c;transform:translateY(0.16px) rotate(0.03deg) scaleX(1.2118)">Face</div>
<div class="t" style="left:827.43px;top:313px;color:#2c2c2c;font-size:6.1px;font-weight:400;-webkit-text-stroke:0.28px #2c2c2c;transform:translateY(-0.15px) rotate(0.03deg) scaleX(1.2951)">Lip Sync</div>
<div class="t" style="left:959.28px;top:313px;color:#2d86e6;font-size:6.1px;font-weight:400;transform:translateY(-0.03px) rotate(0.03deg) scaleX(1.2267)">50</div>
<div class="t" style="left:812.55px;top:328px;color:#222;font-size:7.2px;font-weight:700;transform:translateY(-0.28px) rotate(0.03deg) scaleX(1.244)">Modifiers</div>
<div class="t" style="left:812.36px;top:342px;color:#2c2c2c;font-size:6.1px;font-weight:400;-webkit-text-stroke:0.28px #2c2c2c;transform:translateY(0.06px) rotate(0.03deg) scaleX(1.379)">Head Tilt</div>
<div class="t" style="left:951.82px;top:342px;color:#2d86e6;font-size:6.1px;font-weight:400;transform:translateY(0.17px) rotate(0.03deg) scaleX(1.3293)">20%</div>
<div class="t" style="left:812.41px;top:353px;color:#2c2c2c;font-size:6.1px;font-weight:400;-webkit-text-stroke:0.28px #2c2c2c;transform:translateY(0.76px) rotate(0.03deg) scaleX(1.3351)">Head Turn</div>
<div class="t" style="left:951.89px;top:353px;color:#2d86e6;font-size:6.1px;font-weight:400;transform:translateY(0.88px) rotate(0.03deg) scaleX(1.3236)">30%</div>
<div class="t" style="left:812.29px;top:365px;color:#2c2c2c;font-size:6.1px;font-weight:400;-webkit-text-stroke:0.28px #2c2c2c;transform:translateY(0.56px) rotate(0.03deg) scaleX(1.3307)">Bend Strength</div>
<div class="t" style="left:952.02px;top:365px;color:#2d86e6;font-size:6.1px;font-weight:400;transform:translateY(0.68px) rotate(0.03deg) scaleX(1.3133)">50%</div>
<div class="t" style="left:812.15px;top:377px;color:#2c2c2c;font-size:6.1px;font-weight:400;-webkit-text-stroke:0.28px #2c2c2c;transform:translateY(0.26px) rotate(0.03deg) scaleX(1.3796)">Stretchy Limbs</div>
<div class="t" style="left:952.01px;top:377px;color:#2d86e6;font-size:6.1px;font-weight:400;transform:translateY(0.38px) rotate(0.03deg) scaleX(1.314)">80%</div>
<div class="t" style="left:812.62px;top:391px;color:#222;font-size:7.2px;font-weight:700;transform:translateY(0.22px) rotate(0.03deg) scaleX(1.1339)">Physics</div>
<div class="t" style="left:829.72px;top:406px;color:#2c2c2c;font-size:6.1px;font-weight:400;-webkit-text-stroke:0.28px #2c2c2c;transform:translateY(0.15px) rotate(0.03deg) scaleX(1.3068)">Enable Physics</div>
<div class="t" style="left:951.82px;top:406px;color:#2d86e6;font-size:6.1px;font-weight:400;transform:translateY(0.27px) rotate(0.03deg) scaleX(1.3293)">20%</div>
<div class="t" style="left:829.7px;top:418px;color:#2c2c2c;font-size:6.1px;font-weight:400;-webkit-text-stroke:0.28px #2c2c2c;transform:translateY(0.26px) rotate(0.03deg) scaleX(1.3424)">Collide with Scene</div>
<div class="t" style="left:828.8px;top:432px;color:#2c2c2c;font-size:6.1px;font-weight:400;-webkit-text-stroke:0.28px #2c2c2c;transform:translateY(0.26px) rotate(0.03deg) scaleX(1.2711)">Dangle</div>
<div class="t" style="left:951.89px;top:432px;color:#2d86e6;font-size:6.1px;font-weight:400;transform:translateY(0.38px) rotate(0.03deg) scaleX(1.3236)">30%</div>
</div>
<div id="edge"></div></body></html>
